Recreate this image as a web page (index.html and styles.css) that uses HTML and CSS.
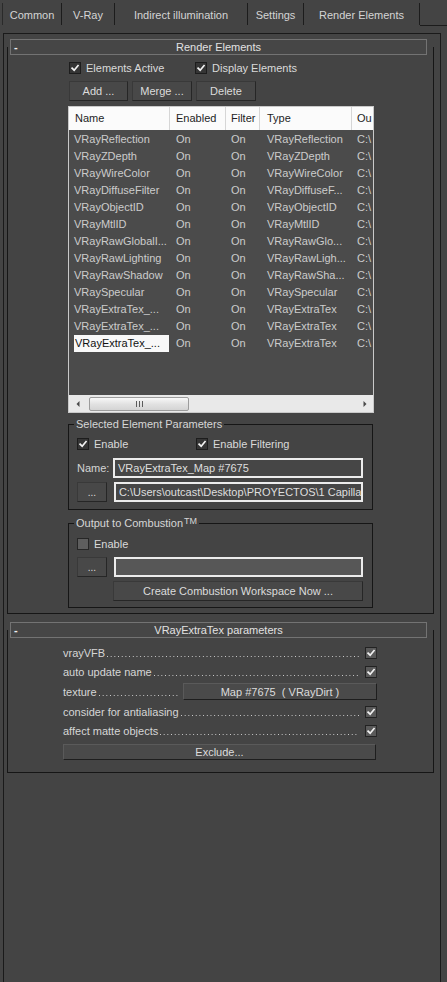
FILE: index.html
```html
<!DOCTYPE html>
<html>
<head>
<meta charset="utf-8">
<title>Render Elements</title>
<link rel="stylesheet" href="styles.css">
</head>
<body>
<div class="tabs">
  <div class="tab t1">Common</div>
  <div class="tab t2">V-Ray</div>
  <div class="tab t3">Indirect illumination</div>
  <div class="tab t4">Settings</div>
  <div class="tab t5 active">Render Elements</div>
  <div class="tab-fill"></div>
</div>

<div class="panel">
  <section class="rollout ro1">
    <div class="ro-head"><span class="ro-minus">-</span><span class="ro-title">Render Elements</span><span></span></div>
    <div class="ro-body">
      <div class="re-col">
        <div class="chk-row">
          <div class="chk-item w126"><span class="cb dark"><svg viewBox="0 0 12 12"><path d="M2.5 6.2 L5 8.6 L9.6 3.2"/></svg></span>Elements Active</div>
          <div class="chk-item"><span class="cb dark"><svg viewBox="0 0 12 12"><path d="M2.5 6.2 L5 8.6 L9.6 3.2"/></svg></span>Display Elements</div>
        </div>
        <div class="btn-row">
          <div class="btn b-add">Add ...</div>
          <div class="btn b-merge">Merge ...</div>
          <div class="btn b-del">Delete</div>
        </div>

        <div class="list">
          <div class="list-head">
            <div class="lc c1">Name</div>
            <div class="lc c2">Enabled</div>
            <div class="lc c3">Filter</div>
            <div class="lc c4">Type</div>
            <div class="lc c5">Ou</div>
          </div>
          <div class="list-body">
            <div class="lrow"><div class="lc c1">VRayReflection</div><div class="lc c2">On</div><div class="lc c3">On</div><div class="lc c4">VRayReflection</div><div class="lc c5">C:\</div></div>
            <div class="lrow"><div class="lc c1">VRayZDepth</div><div class="lc c2">On</div><div class="lc c3">On</div><div class="lc c4">VRayZDepth</div><div class="lc c5">C:\</div></div>
            <div class="lrow"><div class="lc c1">VRayWireColor</div><div class="lc c2">On</div><div class="lc c3">On</div><div class="lc c4">VRayWireColor</div><div class="lc c5">C:\</div></div>
            <div class="lrow"><div class="lc c1">VRayDiffuseFilter</div><div class="lc c2">On</div><div class="lc c3">On</div><div class="lc c4">VRayDiffuseF...</div><div class="lc c5">C:\</div></div>
            <div class="lrow"><div class="lc c1">VRayObjectID</div><div class="lc c2">On</div><div class="lc c3">On</div><div class="lc c4">VRayObjectID</div><div class="lc c5">C:\</div></div>
            <div class="lrow"><div class="lc c1">VRayMtlID</div><div class="lc c2">On</div><div class="lc c3">On</div><div class="lc c4">VRayMtlID</div><div class="lc c5">C:\</div></div>
            <div class="lrow"><div class="lc c1">VRayRawGlobalI...</div><div class="lc c2">On</div><div class="lc c3">On</div><div class="lc c4">VRayRawGlo...</div><div class="lc c5">C:\</div></div>
            <div class="lrow"><div class="lc c1">VRayRawLighting</div><div class="lc c2">On</div><div class="lc c3">On</div><div class="lc c4">VRayRawLigh...</div><div class="lc c5">C:\</div></div>
            <div class="lrow"><div class="lc c1">VRayRawShadow</div><div class="lc c2">On</div><div class="lc c3">On</div><div class="lc c4">VRayRawSha...</div><div class="lc c5">C:\</div></div>
            <div class="lrow"><div class="lc c1">VRaySpecular</div><div class="lc c2">On</div><div class="lc c3">On</div><div class="lc c4">VRaySpecular</div><div class="lc c5">C:\</div></div>
            <div class="lrow"><div class="lc c1">VRayExtraTex_...</div><div class="lc c2">On</div><div class="lc c3">On</div><div class="lc c4">VRayExtraTex</div><div class="lc c5">C:\</div></div>
            <div class="lrow"><div class="lc c1">VRayExtraTex_...</div><div class="lc c2">On</div><div class="lc c3">On</div><div class="lc c4">VRayExtraTex</div><div class="lc c5">C:\</div></div>
            <div class="lrow"><div class="lc c1"><span class="sel">VRayExtraTex_...</span></div><div class="lc c2">On</div><div class="lc c3">On</div><div class="lc c4">VRayExtraTex</div><div class="lc c5">C:\</div></div>
          </div>
          <div class="hscroll">
            <div class="sarrow"><svg viewBox="0 0 6 8"><path d="M4.5 1 L1.5 4 L4.5 7 Z"/></svg></div>
            <div class="sthumb"><span class="grip"></span><span class="grip"></span><span class="grip"></span></div>
            <div class="strack"></div>
            <div class="sarrow"><svg viewBox="0 0 6 8"><path d="M1.5 1 L4.5 4 L1.5 7 Z"/></svg></div>
          </div>
        </div>

        <div class="group g-sel">
          <div class="legend">Selected Element Parameters</div>
          <div class="g-row r-en">
            <div class="chk-item w119"><span class="cb dark"><svg viewBox="0 0 12 12"><path d="M2.5 6.2 L5 8.6 L9.6 3.2"/></svg></span>Enable</div>
            <div class="chk-item"><span class="cb dark"><svg viewBox="0 0 12 12"><path d="M2.5 6.2 L5 8.6 L9.6 3.2"/></svg></span>Enable Filtering</div>
          </div>
          <div class="g-row r-field">
            <div class="fld-label">Name:</div>
            <div class="field">VRayExtraTex_Map #7675</div>
          </div>
          <div class="g-row r-field r-tight">
            <div class="btn small">...</div>
            <div class="field">C:\Users\outcast\Desktop\PROYECTOS\1 Capilla K</div>
          </div>
        </div>

        <div class="group g-comb">
          <div class="legend">Output to Combustion<sup class="tm">TM</sup></div>
          <div class="g-row r-en">
            <div class="chk-item"><span class="cb off"></span>Enable</div>
          </div>
          <div class="g-row r-field r-mid">
            <div class="btn small">...</div>
            <div class="field empty"></div>
          </div>
          <div class="g-row r-field r-tight">
            <div class="btn wide">Create Combustion Workspace Now ...</div>
          </div>
        </div>
      </div>
    </div>
  </section>

  <section class="rollout ro2">
    <div class="ro-head"><span class="ro-minus">-</span><span class="ro-title">VRayExtraTex parameters</span><span></span></div>
    <div class="ro-body">
      <div class="params">
        <div class="prow"><span class="plabel">vrayVFB</span><span class="leader"></span><span class="cb grey"><svg viewBox="0 0 12 12"><path d="M2.5 6.2 L5 8.6 L9.6 3.2"/></svg></span></div>
        <div class="prow"><span class="plabel">auto update name</span><span class="leader"></span><span class="cb grey"><svg viewBox="0 0 12 12"><path d="M2.5 6.2 L5 8.6 L9.6 3.2"/></svg></span></div>
        <div class="prow"><span class="plabel">texture</span><span class="leader short"></span><span class="btn mapbtn">Map #7675&nbsp; ( VRayDirt )</span></div>
        <div class="prow"><span class="plabel">consider for antialiasing</span><span class="leader"></span><span class="cb grey"><svg viewBox="0 0 12 12"><path d="M2.5 6.2 L5 8.6 L9.6 3.2"/></svg></span></div>
        <div class="prow"><span class="plabel">affect matte objects</span><span class="leader"></span><span class="cb grey"><svg viewBox="0 0 12 12"><path d="M2.5 6.2 L5 8.6 L9.6 3.2"/></svg></span></div>
        <div class="btn exclude">Exclude...</div>
      </div>
    </div>
  </section>
</div>
</body>
</html>
```

FILE: styles.css
```css
* { box-sizing: border-box; }

html, body {
  margin: 0;
  padding: 0;
  background: #444444;
  overflow: hidden;
}

body {
  width: 447px;
  height: 982px;
  font-family: "Liberation Sans", Arial, sans-serif;
  font-size: 11px;
  color: #d8d8d8;
}

/* ---------- tabs ---------- */
.tabs {
  display: flex;
  height: 26px;
  padding-left: 2px;
}
.tab {
  margin-top: 3px;
  height: 22px;
  line-height: 22px;
  padding-top: 1px;
  text-align: center;
  border-right: 1px solid #1c1c1c;
  color: #d4d4d4;
}
.t1 { width: 60px; border-left: 1px solid #2a2a2a; }
.t2 { width: 53px; }
.t3 { width: 133px; }
.t4 { width: 56px; }
.t5 { width: 116px; }
.tab-fill {
  flex: 1;
  height: 26px;
  border-bottom: 1px solid #1c1c1c;
}

/* ---------- outer panel ---------- */
.panel {
  margin: 7px 6px 0 3px;
  height: 980px;
  border: 1px solid #1a1a1a;
  border-bottom: none;
  padding: 0 7px 0 3px;
}

/* ---------- rollouts ---------- */
.rollout { width: 427px; }
.ro1 { margin-top: 5px; }
.ro2 { margin-top: 8px; }

.ro-head {
  position: relative;
  z-index: 1;
  display: grid;
  grid-template-columns: 20px 1fr 20px;
  margin: 0 7px 0 3px;
  height: 16px;
  line-height: 14px;
  border: 1px solid #737373;
  background: #464646;
  color: #e2e2e2;
}
.ro-minus {
  padding-left: 3px;
  font-weight: bold;
  color: #f0f0f0;
}
.ro-title { text-align: center; }

.ro-body {
  margin-top: -8px;
  padding-top: 8px;
  border: 1px solid #161616;
  border-top: none;
}
.ro1 .ro-body { padding-bottom: 5px; }
.ro2 .ro-body { padding-bottom: 12px; }

/* ---------- render elements column ---------- */
.re-col {
  margin-left: 60px;
  width: 306px;
}

.chk-row {
  display: flex;
  align-items: center;
  margin-top: 6px;
  height: 14px;
  padding-left: 1px;
}
.chk-item {
  display: flex;
  align-items: center;
  gap: 5px;
  white-space: nowrap;
  color: #dadada;
}
.w126 { width: 126px; }
.w119 { width: 119px; }

.cb {
  display: inline-flex;
  align-items: center;
  justify-content: center;
  width: 12px;
  height: 12px;
  flex: none;
  border: 1px solid #1d1d1d;
}
.cb svg { width: 12px; height: 12px; }
.cb path {
  fill: none;
  stroke: #f2f2f2;
  stroke-width: 2;
  stroke-linecap: square;
}
.cb.dark { background: #353535; }
.cb.off { background: #5e5e5e; border-color: #262626; }
.cb.grey {
  background: #5a5a5a;
  border-color: #222;
  border-right-color: #2c2c2c;
}

.btn-row {
  display: flex;
  gap: 4px;
  margin-top: 6px;
  padding-left: 1px;
}

.btn {
  display: flex;
  align-items: center;
  justify-content: center;
  height: 20px;
  background: #484848;
  border: 1px solid #262626;
  border-top-color: #393939;
  border-left-color: #393939;
  color: #dcdcdc;
  white-space: nowrap;
}
.b-add { width: 59px; }
.b-merge { width: 60px; }
.b-del { width: 60px; }

/* ---------- list ---------- */
.list {
  margin-top: 5px;
  height: 307px;
  display: flex;
  flex-direction: column;
  border: 1px solid #c9c9c9;
}
.list-head {
  display: grid;
  grid-template-columns: 101px 56px 34px 92px 1fr;
  height: 23px;
  background: #fbfbfb;
  color: #1e1e1e;
  line-height: 23px;
}
.list-head .lc { border-right: 1px solid #d6d6d6; }
.list-head .c5 { border-right: none; }
.list-body {
  flex: 1;
  padding-top: 1px;
  background: #4b4b4b;
  overflow: hidden;
}
.lrow {
  display: grid;
  grid-template-columns: 101px 56px 34px 92px 1fr;
  height: 17px;
  line-height: 17px;
  color: #cbcbcb;
}
.lc {
  white-space: nowrap;
  overflow: hidden;
}
.c1 { padding-left: 6px; }
.c2 { padding-left: 6px; }
.c3 { padding-left: 5px; }
.c4 { padding-left: 7px; }
.c5 { padding-left: 5px; }
.lrow .c1 { padding-left: 5px; }
.sel {
  display: block;
  background: #f8f8f8;
  color: #111;
  padding-left: 1px;
  margin-right: 1px;
}

.hscroll {
  display: flex;
  align-items: center;
  height: 17px;
  background: #e9e9e9;
}
.sarrow {
  width: 17px;
  height: 17px;
  display: flex;
  align-items: center;
  justify-content: center;
}
.sarrow svg { width: 6px; height: 8px; }
.sarrow path { fill: #4a4a4a; }
.sthumb {
  margin-left: 3px;
  width: 100px;
  height: 14px;
  border: 1px solid #9c9c9c;
  border-radius: 2px;
  background: linear-gradient(#f7f7f7, #e2e2e2 50%, #d4d4d4);
  display: flex;
  align-items: center;
  justify-content: center;
  gap: 2px;
}
.grip {
  width: 1px;
  height: 6px;
  background: #5b5b5b;
}
.strack { flex: 1; }

/* ---------- group boxes ---------- */
.group {
  width: 305px;
  border: 1px solid #161616;
  padding: 0 9px 0 8px;
}
.g-sel { margin-top: 11px; padding-bottom: 7px; }
.g-comb { margin-top: 13px; padding-bottom: 6px; }

.legend {
  width: fit-content;
  margin: -8px 0 0 -3px;
  padding: 0 2px;
  height: 14px;
  line-height: 14px;
  background: #444444;
  color: #d6d6d6;
  white-space: nowrap;
}
.tm {
  font-size: 9px;
  vertical-align: 0;
  position: relative;
  top: -3px;
  margin-left: 1px;
}

.g-row { display: flex; align-items: center; }
.r-en { height: 12px; margin-top: 7px; }
.g-comb .r-en { margin-top: 8px; }
.r-field { height: 20px; margin-top: 8px; gap: 7px; }
.r-mid { margin-top: 7px; }
.r-tight { margin-top: 4px; }
.g-comb .r-tight { justify-content: flex-end; }

.fld-label { width: 29px; color: #d4d4d4; }
.field {
  width: 250px;
  height: 20px;
  line-height: 16px;
  padding: 0 3px;
  border: 2px solid #ececec;
  background: #464646;
  color: #dedede;
  white-space: nowrap;
  overflow: hidden;
}
.field.empty { background: #575757; }
.btn.small { width: 30px; font-size: 10px; }
.btn.wide { width: 250px; }

/* ---------- params rollout ---------- */
.params {
  margin-left: 55px;
  width: 314px;
  padding-top: 5px;
}
.prow {
  display: flex;
  align-items: center;
  height: 19.6px;
  color: #d6d6d6;
}
.plabel { white-space: nowrap; flex: none; }
.leader {
  flex: 1;
  align-self: center;
  height: 1px;
  margin: 7px 6px 0 2px;
  background-image: linear-gradient(90deg, #cfcfcf 0, #cfcfcf 1px, transparent 1px);
  background-size: 3.7px 1px;
  background-repeat: repeat-x;
}
.leader.short { margin-right: 4px; }
.prow .cb { width: 12px; height: 12px; }
.mapbtn {
  width: 194px;
  height: 17px;
  flex: none;
  border-color: #5a5a5a #1e1e1e #1e1e1e #5a5a5a;
  background: #4a4a4a;
}
.exclude {
  margin-top: 3px;
  height: 16px;
  width: 313px;
  border-color: #5a5a5a #1e1e1e #1e1e1e #5a5a5a;
  background: #4a4a4a;
}
```
